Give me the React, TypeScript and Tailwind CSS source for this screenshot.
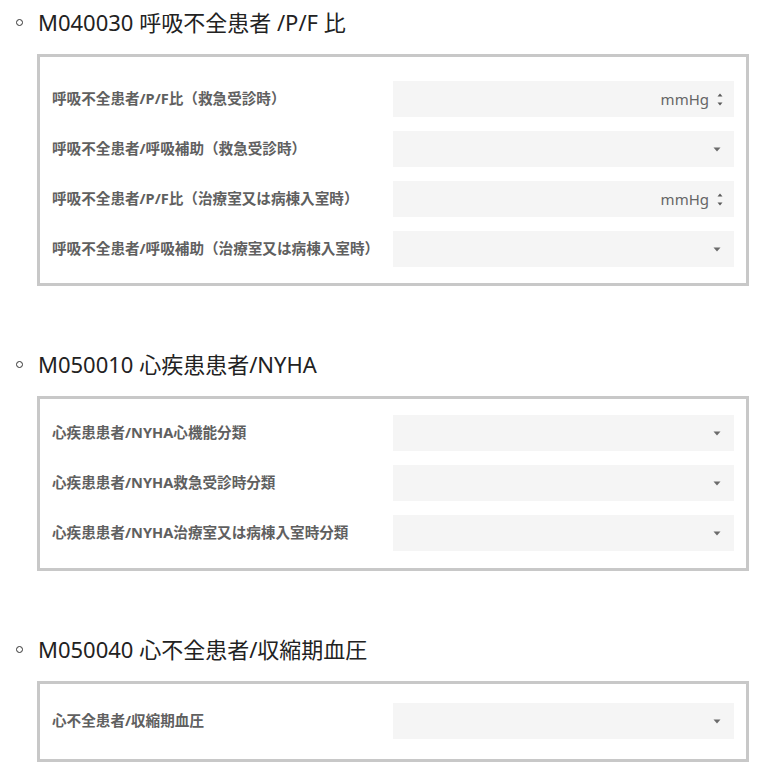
import React from "react";

type Field = { label: string; kind: "number" | "select" };

type Section = { title: string; pad: string; fields: Field[] };

const sections: Section[] = [
  {
    title: "M040030 呼吸不全患者 /P/F 比",
    pad: "pt-[24px] pb-[16px]",
    fields: [
      { label: "呼吸不全患者/P/F比（救急受診時）", kind: "number" },
      { label: "呼吸不全患者/呼吸補助（救急受診時）", kind: "select" },
      { label: "呼吸不全患者/P/F比（治療室又は病棟入室時）", kind: "number" },
      { label: "呼吸不全患者/呼吸補助（治療室又は病棟入室時）", kind: "select" },
    ],
  },
  {
    title: "M050010 心疾患患者/NYHA",
    pad: "pt-[16px] pb-[17px]",
    fields: [
      { label: "心疾患患者/NYHA心機能分類", kind: "select" },
      { label: "心疾患患者/NYHA救急受診時分類", kind: "select" },
      { label: "心疾患患者/NYHA治療室又は病棟入室時分類", kind: "select" },
    ],
  },
  {
    title: "M050040 心不全患者/収縮期血圧",
    pad: "pt-[19px] pb-[20px]",
    fields: [{ label: "心不全患者/収縮期血圧", kind: "select" }],
  },
];

function Caret() {
  return (
    <svg width="8" height="5" viewBox="0 0 8 5" className="shrink-0">
      <path d="M0.5 0.5h7L4 4.5z" fill="#6b6b6b" />
    </svg>
  );
}

function Spinner() {
  return (
    <div className="flex flex-col items-center gap-[5px]">
      <svg width="6" height="4" viewBox="0 0 6 4">
        <path d="M3 0.5L5.5 3.5h-5z" fill="#5a5a5a" />
      </svg>
      <svg width="6" height="4" viewBox="0 0 6 4">
        <path d="M0.5 0.5h5L3 3.5z" fill="#5a5a5a" />
      </svg>
    </div>
  );
}

function FieldRow({ field }: { field: Field }) {
  return (
    <div className="grid grid-cols-2 items-center">
      <div className="text-[14.6px] font-bold text-[#606060]">{field.label}</div>
      <div className="flex h-9 items-center justify-end bg-[#f5f5f5] pr-[11px]">
        {field.kind === "number" ? (
          <div className="flex items-center gap-[8px]">
            <span className="text-[15px] text-[#666666]">mmHg</span>
            <Spinner />
          </div>
        ) : (
          <div className="pr-[2px]">
            <Caret />
          </div>
        )}
      </div>
    </div>
  );
}

export default function App() {
  return (
    <main
      className="min-h-screen bg-white pt-[6px] pr-[18px]"
      style={{ fontFamily: '"Noto Sans", "Noto Sans CJK JP", sans-serif' }}
    >
      {sections.map((s, i) => (
        <section key={s.title} className={i === 0 ? "" : "mt-[62px]"}>
          <div className="flex h-8 items-center">
            <span className="ml-[16px] h-[7px] w-[7px] rounded-full border border-[#333333]" />
            <h2 className="ml-[15px] text-[22px] font-normal leading-none text-[#222222]">
              {s.title}
            </h2>
          </div>
          <div
            className={`ml-[37px] mt-[16px] flex flex-col gap-[14px] border-[3px] border-[#c8c8c8] px-[12px] ${s.pad}`}
          >
            {s.fields.map((f) => (
              <FieldRow key={f.label} field={f} />
            ))}
          </div>
        </section>
      ))}
    </main>
  );
}
